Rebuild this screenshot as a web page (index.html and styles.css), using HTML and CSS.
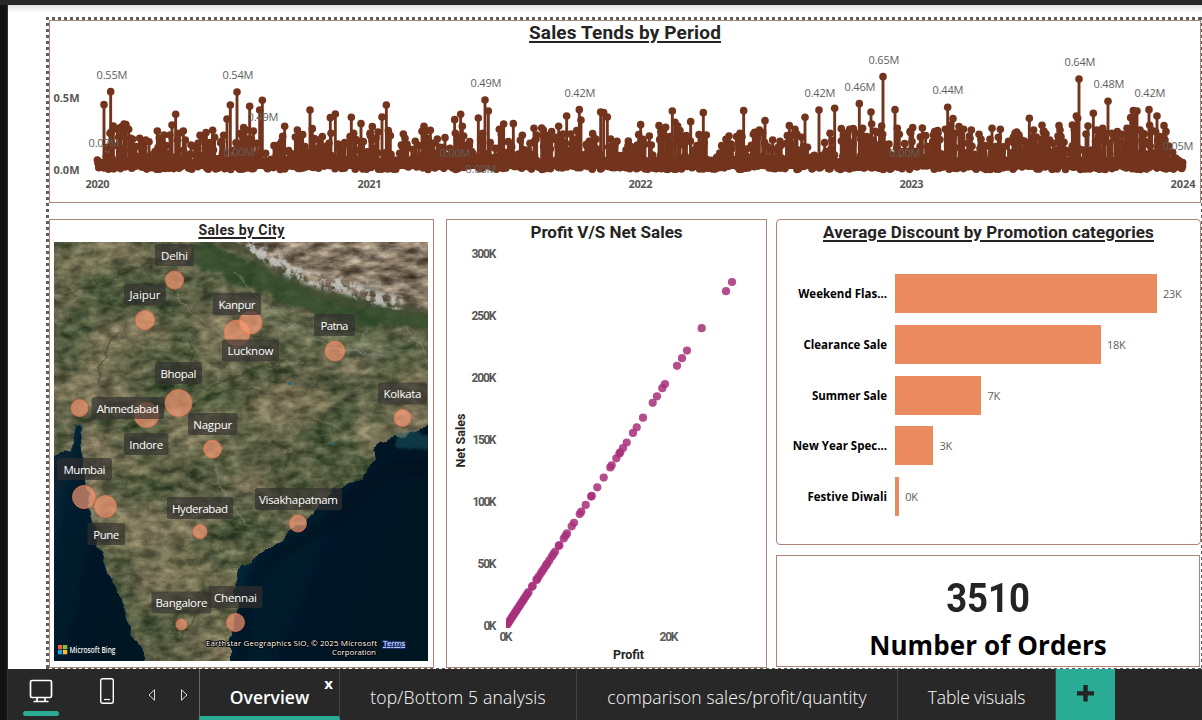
FILE: index.html
```html
<!DOCTYPE html>
<html lang="en">
<head>
<meta charset="utf-8">
<title>Sales dashboard</title>
<link rel="stylesheet" href="styles.css">
</head>
<body>
<div class="app">
  <div class="rail"></div>
  <div class="main">
    <div class="workspace">
      <div class="report">
        <section class="panel trend">
          <h2 class="title underlined t-trend">Sales Tends by Period</h2>
          <svg class="chart" id="trend" viewBox="50 47 1150 155" width="1150" height="155">
            <g id="stems" class="stems"></g>
            <g class="tick strong">
              <text x="53.5" y="102" textLength="26">0.5M</text>
              <text x="53.5" y="174" textLength="26">0.0M</text>
              <text x="85.5" y="188" textLength="24">2020</text>
              <text x="357.5" y="188" textLength="24">2021</text>
              <text x="628.5" y="188" textLength="24">2022</text>
              <text x="899.5" y="188" textLength="24">2023</text>
              <text x="1170.5" y="188" textLength="25">2024</text>
            </g>
            <g id="values" class="value"></g>
          </svg>
        </section>
        <div class="lower">
          <section class="panel city">
            <h2 class="title underlined t-city">Sales by City</h2>
            <svg class="map" viewBox="54 242 374 419" width="374" height="419">
              <defs>
                <filter id="terrain" x="0" y="0" width="100%" height="100%" color-interpolation-filters="sRGB">
                  <feTurbulence type="fractalNoise" baseFrequency="0.016 0.022" numOctaves="5" seed="11"/>
                  <feColorMatrix values=".6 .05 0 0 .04  .38 .1 0 0 .14  .38 .05 0 0 .06  0 0 0 0 1"/>
                </filter>
                <filter id="grain" x="0" y="0" width="100%" height="100%" color-interpolation-filters="sRGB">
                  <feTurbulence type="fractalNoise" baseFrequency="0.07 0.12" numOctaves="5" seed="4"/>
                  <feColorMatrix values="1.5 0 0 0 -.35  1.35 0 0 0 -.27  1.15 0 0 0 -.28  0 0 0 0 1"/>
                </filter>
                <filter id="plateau" x="0" y="0" width="100%" height="100%" color-interpolation-filters="sRGB">
                  <feTurbulence type="fractalNoise" baseFrequency="0.05 0.12" numOctaves="5" seed="8"/>
                  <feColorMatrix values=".85 0 0 0 .08  .8 0 0 0 .05  .72 0 0 0 .02  0 0 0 0 1"/>
                </filter>
                <filter id="snowy" x="-10%" y="-10%" width="120%" height="120%" color-interpolation-filters="sRGB">
                  <feTurbulence type="fractalNoise" baseFrequency="0.12" numOctaves="4" seed="3" result="n"/>
                  <feColorMatrix in="n" values="0 0 0 0 .76  0 0 0 0 .77  0 0 0 0 .75  6 0 0 0 -2.6" result="s"/>
                  <feGaussianBlur in="SourceAlpha" stdDeviation="2" result="a"/>
                  <feComposite in="s" in2="a" operator="in"/>
                </filter>
                <filter id="rough" x="-5%" y="-5%" width="110%" height="110%">
                  <feTurbulence type="fractalNoise" baseFrequency="0.08" numOctaves="3" seed="5"/>
                  <feDisplacementMap in="SourceGraphic" scale="9" xChannelSelector="R" yChannelSelector="G"/>
                </filter>
                <filter id="ridge" x="-5%" y="-20%" width="110%" height="140%">
                  <feTurbulence type="fractalNoise" baseFrequency="0.1" numOctaves="3" seed="9"/>
                  <feDisplacementMap in="SourceGraphic" scale="16" xChannelSelector="R" yChannelSelector="G"/>
                  <feGaussianBlur stdDeviation="1.2"/>
                </filter>
                <filter id="soft8"><feGaussianBlur stdDeviation="7"/></filter>
                <filter id="soft3" x="-20%" y="-20%" width="140%" height="140%"><feGaussianBlur stdDeviation="3"/></filter>
                <linearGradient id="sea" x1="0" x2="1" y1="0" y2="0.5">
                  <stop offset="0" stop-color="#0a2a3a"/><stop offset=".45" stop-color="#041b2b"/><stop offset="1" stop-color="#021220"/>
                </linearGradient>
                <clipPath id="tibet"><path d="M230 240 250 250 262 256 273 264 281 270 290 272 300 279 307 284 323 287 340 294 356 294 373 303 388 303 403 310 415 312 430 313 430 240Z"/></clipPath>
              </defs>
              <rect x="54" y="242" width="374" height="419" filter="url(#terrain)"/>
              <g filter="url(#soft8)">
                <g fill="#30492a" opacity=".5">
                  <ellipse cx="118" cy="287" rx="40" ry="16"/><ellipse cx="180" cy="350" rx="22" ry="24"/>
                  <ellipse cx="72" cy="340" rx="16" ry="30"/><ellipse cx="235" cy="465" rx="20" ry="10"/>
                  <ellipse cx="292" cy="478" rx="26" ry="30"/><ellipse cx="335" cy="458" rx="32" ry="16"/>
                  <ellipse cx="270" cy="535" rx="30" ry="12"/><ellipse cx="122" cy="590" rx="11" ry="52"/>
                  <ellipse cx="215" cy="398" rx="55" ry="10"/><ellipse cx="65" cy="250" rx="22" ry="8"/>
                </g>
                <g fill="#9a8965" opacity=".42">
                  <ellipse cx="80" cy="264" rx="26" ry="9"/><ellipse cx="125" cy="252" rx="26" ry="7"/><ellipse cx="148" cy="328" rx="20" ry="16"/>
                  <ellipse cx="110" cy="350" rx="24" ry="12"/><ellipse cx="290" cy="405" rx="45" ry="18"/>
                  <ellipse cx="155" cy="465" rx="40" ry="16"/><ellipse cx="125" cy="530" rx="20" ry="16"/>
                  <ellipse cx="185" cy="572" rx="30" ry="25"/><ellipse cx="408" cy="385" rx="20" ry="26"/>
                </g>
                <path d="M235 295 300 332 350 346 428 344" fill="none" stroke="#788464" stroke-width="16" opacity=".55"/>
              </g>
              <rect x="54" y="242" width="374" height="419" filter="url(#grain)" opacity=".32"/>
              <path d="M192 250C225 266 255 277 289 291S345 308 380 313S410 315 440 315" fill="none" stroke="#2b4628" stroke-width="25" opacity=".75" filter="url(#ridge)"/>
              <g clip-path="url(#tibet)">
                <rect x="220" y="242" width="208" height="74" filter="url(#plateau)"/>
              </g>
              <path d="M222 242C255 257 280 272 314 288S360 299 432 314" fill="none" stroke="#474d35" stroke-width="9" opacity=".75" filter="url(#ridge)"/>
              <path d="M246 246 268 256 292 271 318 281 345 286 368 296 384 300 402 304" fill="none" stroke="#fff" stroke-width="14" opacity=".9" filter="url(#snowy)"/>
              <path d="M275 248 310 256M315 274 365 282 428 290M350 258 400 250" fill="none" stroke="#fff" stroke-width="8" opacity=".3" filter="url(#snowy)"/>
              <g fill="none" stroke="#a2a58e" stroke-width="1.2" opacity=".35" filter="url(#rough)">
                <path d="M172 286C180 305 205 322 235 345S278 366 305 362"/>
                <path d="M235 272C256 300 290 330 330 344S350 352 385 354M405 328 428 355"/>
                <path d="M215 468 222 490 235 510 250 528"/>
              </g>
              <path d="M325 349 350 349 362 355 388 354M362 352 360 340 368 330" fill="none" stroke="#84908a" stroke-width="2" opacity=".4" filter="url(#rough)"/>
              <g fill="none" stroke="#27381f" stroke-width="2" opacity=".4" filter="url(#rough)">
                <path d="M55 294C85 294 106 278 148 264S165 252 178 248M205 390C230 378 250 370 285 360"/>
                <path d="M190 405 230 388 260 390M98 385 104 350 120 330M190 365 196 350 190 340"/>
                <path d="M180 640 207 600 203 580M270 440 290 450 285 470"/>
              </g>
              <g fill="none" stroke="#8f8266" stroke-width="2" opacity=".4" filter="url(#rough)">
                <path d="M112 528 140 545 173 555 195 558M175 580 190 570M260 395 300 400 330 392M100 500 110 520"/>
                <path d="M92 262 96 246 120 243M58 272 80 264M310 415 345 430"/>
              </g>
              <path d="M288 384 292 383M331 444 335 443" fill="none" stroke="#2d6673" stroke-width="3" opacity=".9"/>
              <g filter="url(#rough)">
                <path d="M45 460 56 454 68 450 74 442 73 431 75 424 80 427 81 435 83 449 84 470 84 484 88 497 92 520 98 544 105 565 115 583 122 600 126 614 132 635 143 652 149 675H40Z" fill="url(#sea)" stroke="#1f5262" stroke-opacity=".45"/>
                <path d="M229 675 229 640 234 626 238 607 235 580 241 565 251 563 259 555 270 548 280 540 287 535 300 525 318 510 329 496 338 487 350 482 362 477 368 468 375 460 373 450 380 441 393 439 405 436 413 434 420 428 440 424V675Z" fill="url(#sea)"/>
              </g>
              <path d="M392 436 402 434 412 432 430 436 434 446 415 449 395 446Z" fill="#1c5560" opacity=".55" filter="url(#ridge)"/>
              <path d="M436 466 390 470 363 492 325 526 298 542 272 558 255 580 248 604 240 665" fill="none" stroke="#01101f" stroke-width="8" opacity=".5" filter="url(#soft3)"/>
              <g id="bubbles" class="bubble"></g>
              <g id="cities" class="city-label"></g>
              <g>
                <rect x="58" y="645" width="4.3" height="4.3" fill="#f0622f"/><rect x="63" y="645" width="4.3" height="4.3" fill="#8bbd3c"/>
                <rect x="58" y="650" width="4.3" height="4.3" fill="#20a3e4"/><rect x="63" y="650" width="4.3" height="4.3" fill="#fbbc24"/>
                <text class="bing" x="69.5" y="652.5" textLength="46" lengthAdjust="spacingAndGlyphs">Microsoft Bing</text>
              </g>
              <g class="credit">
                <text x="206" y="646" textLength="171">Earthstar Geographics SIO, © 2025 Microsoft</text>
                <text x="332" y="655" textLength="44">Corporation</text>
                <text class="terms" x="383" y="646" textLength="22">Terms</text>
              </g>
            </svg>
          </section>
          <section class="panel profit">
            <h2 class="title t-profit">Profit V/S Net Sales</h2>
            <svg class="chart" viewBox="447 246 319 421" width="319" height="421">
              <defs><clipPath id="plot"><rect x="506" y="246" width="260" height="382"/></clipPath></defs>
              <g id="dots" class="dots" clip-path="url(#plot)"></g>
              <g class="tick cond">
                <text x="471.5" y="258" textLength="25">300K</text>
                <text x="471.5" y="320" textLength="25">250K</text>
                <text x="471.5" y="382" textLength="25">200K</text>
                <text x="472.5" y="444" textLength="24">150K</text>
                <text x="472.5" y="506" textLength="24">100K</text>
                <text x="477.5" y="568" textLength="19">50K</text>
                <text x="483.5" y="630" textLength="13">0K</text>
                <text x="499.5" y="641" textLength="13">0K</text>
                <text x="659.5" y="641" textLength="19">20K</text>
              </g>
              <g class="axis-name">
                <text x="613" y="659" textLength="31">Profit</text>
                <text transform="translate(464.5 467.5) rotate(-90)" textLength="54">Net Sales</text>
              </g>
            </svg>
          </section>
          <div class="side">
            <section class="panel discount">
              <h2 class="title underlined t-discount">Average Discount by Promotion categories</h2>
              <ul class="bars">
                <li><span class="name">Weekend Flas...</span><i class="bar" style="width:261.5px"></i><span class="amount">23K</span></li>
                <li><span class="name">Clearance Sale</span><i class="bar" style="width:205.5px"></i><span class="amount">18K</span></li>
                <li><span class="name">Summer Sale</span><i class="bar" style="width:86px"></i><span class="amount">7K</span></li>
                <li><span class="name">New Year Spec...</span><i class="bar" style="width:38px"></i><span class="amount">3K</span></li>
                <li><span class="name">Festive Diwali</span><i class="bar" style="width:3.7px"></i><span class="amount">0K</span></li>
              </ul>
            </section>
            <section class="panel orders">
              <strong class="count">3510</strong>
              <span class="caption">Number of Orders</span>
            </section>
          </div>
        </div>
      </div>
    </div>
    <footer class="tabs">
      <button class="view desktop on" aria-label="Desktop layout">
        <svg viewBox="0 0 24 24" width="24" height="24"><path d="M3 1.5H21Q22.5 1.5 22.5 3V17Q22.5 18.500 21 18.500H3Q1.500 18.500 1.500 17V3Q1.500 1.500 3 1.500ZM8 19V22M16 19V22M4.500 22.500H19.500" fill="none" stroke="#fff" stroke-width="1.7"/></svg>
      </button>
      <button class="view phone" aria-label="Mobile layout">
        <svg viewBox="0 0 16 28" width="16" height="28"><rect x="1.700" y="1.700" width="12.600" height="24.600" rx="2" fill="none" stroke="#fff" stroke-width="1.400"/><path d="M5 22.500H11" stroke="#fff" stroke-width="1.200"/></svg>
      </button>
      <div class="arrows">
        <svg viewBox="0 0 8 12" width="8" height="12"><path d="M6.500 .8V11.200L1 6Z"/></svg>
        <svg viewBox="0 0 8 12" width="8" height="12"><path d="M1.500 .8V11.200L7 6Z"/></svg>
      </div>
      <div class="tab active w1"><span>Overview</span><b class="close">x</b></div>
      <div class="tab w2"><span>top/Bottom 5 analysis</span></div>
      <div class="tab w3"><span>comparison sales/profit/quantity</span></div>
      <div class="tab w4"><span>Table visuals</span></div>
      <button class="add" aria-label="New page"><svg viewBox="0 0 17 17" width="17" height="17"><path d="M6.300 0H10.700V6.300H17V10.500H10.700V16.500H6.300V10.500H0V6.300H6.300Z" fill="#242424"/></svg></button>
    </footer>
  </div>
</div>
<script src="charts.js"></script>
</body>
</html>
```
FILE: styles.css
```css
* { box-sizing: border-box; }
body { margin: 0; background: #282828; font-family: "Open Sans", "Noto Sans", sans-serif; overflow: hidden; }
.app { display: flex; width: 1202px; height: 720px; padding-top: 5px; background: #282828; }
.rail { width: 8px; height: 720px; background: #131313; border-right: 1px solid #333; flex: none; }
.main { flex: 1; display: flex; flex-direction: column; min-width: 0; }
.workspace {
  height: 664px; padding: 12px 0 0 38px;
  background: linear-gradient(#e2e2e2, #fff 8px) #fff;
}
.report {
  width: 1156px; height: 652px; padding: 3px 0 0 3px;
  background:
    repeating-linear-gradient(90deg, #5e5e5e 0 3px, transparent 3px 6px) 0 0 / 100% 3px no-repeat,
    repeating-linear-gradient(180deg, #5e5e5e 0 3px, transparent 3px 6px) 0 0 / 3px 100% no-repeat,
    repeating-linear-gradient(180deg, #5e5e5e 0 3px, transparent 3px 6px) 100% 0 / 1px 100% no-repeat,
    repeating-linear-gradient(90deg, #5e5e5e 0 3px, transparent 3px 6px) 0 100% / 100% 1px no-repeat;
}
.panel { border: 1px solid #ae8478; background: #fff; display: flex; flex-direction: column; align-items: center; }
.title { margin: 0; font-family: Roboto, sans-serif; font-weight: 700; color: #252423; white-space: nowrap; flex: none; }
.underlined { text-decoration: underline; text-decoration-thickness: 1.5px; text-underline-offset: 2px; }
.chart, .map { display: block; flex: none; }
.map { align-self: flex-start; margin-left: 4px; }

.trend { width: 1152px; height: 183px; }
.t-trend { height: 26px; line-height: 24px; font-size: 19px; letter-spacing: .15px; }
.lower { display: flex; margin-top: 16px; }
.city { width: 385px; height: 449px; margin-right: 12px; }
.t-city { height: 22px; line-height: 21px; font-size: 14px; letter-spacing: .4px; }
.profit { width: 321px; height: 449px; margin-right: 9px; }
.t-profit { height: 26px; line-height: 25px; font-size: 17px; }
.side { width: 425px; display: flex; flex-direction: column; gap: 10px; }
.discount { height: 326px; border-radius: 4px; }
.t-discount { height: 27px; line-height: 25px; font-size: 17px; letter-spacing: .12px; }
.orders { height: 112px; width: 424px; }

.stems line { stroke: #73341d; stroke-width: 2.9; }
.stems circle { fill: #73341d; }
.tick { font: 700 11px "Open Sans", sans-serif; fill: #5a5856; }
.cond { font: 700 12px Roboto, sans-serif; }
.value { font: 11px "Open Sans", sans-serif; fill: #605e5c; text-anchor: middle; }
.dots circle { fill: #a8307c; opacity: .86; }
.axis-name { font: 700 12.5px Roboto, sans-serif; fill: #252423; }

.bubble circle { fill: #fe9c77; fill-opacity: .66; stroke: #e9714d; stroke-width: 1; stroke-opacity: .8; }
.city-label rect { fill: #33302f; fill-opacity: .66; }
.city-label text { font: 11.5px "Open Sans", sans-serif; fill: #fff; text-anchor: middle; }
.bing { font: 600 8px "Open Sans", sans-serif; fill: #f4f4f4; }
.credit { font: 8px "Open Sans", sans-serif; fill: #fff; paint-order: stroke; stroke: #000; stroke-width: 1.6px; }
.terms { fill: #e2e8ff; text-decoration: underline; stroke: #233f90; }

.bars { list-style: none; margin: 27px 0 0; padding: 0; width: 100%; }
.bars li { display: flex; align-items: center; height: 39px; margin-bottom: 11.8px; }
.name { width: 110px; text-align: right; font-size: 11.5px; font-weight: 700; color: #000; white-space: nowrap; }
.bar { height: 39px; margin: 0 6.5px 0 8px; background: #eb895f; flex: none; }
.amount { font-size: 11px; color: #605e5c; letter-spacing: -.3px; }
.count { margin-top: 19px; font: 700 41px/46px Roboto, sans-serif; color: #252423; transform: scaleX(.89); }
.caption { margin-top: 5px; font-weight: 700; font-size: 26px; line-height: 38px; letter-spacing: .1px; color: #000; }

.tabs { height: 51px; display: flex; background: #282828; color: #fff; }
.view { border: 0; padding: 0; background: none; display: flex; justify-content: center; }
.desktop { width: 36px; margin-left: 15px; padding-top: 10px; position: relative; }
.desktop::after { content: ""; position: absolute; left: 0; top: 42px; width: 36px; height: 5px; border-radius: 3px; background: #2aab94; }
.phone { width: 16px; margin-left: 40px; padding-top: 8px; }
.arrows { display: flex; gap: 24px; padding-top: 20px; margin-left: 33px; width: 51px; }
.arrows path { fill: none; stroke: #ddd; stroke-width: 1; }
.tab { height: 51px; display: flex; align-items: center; justify-content: center; padding-top: 5px; border-right: 1px solid #454545; font-size: 17.500px; font-weight: 300; white-space: nowrap; flex: none; }
.w1 { width: 141px; }
.w2 { width: 237px; letter-spacing: .2px; }
.w3 { width: 321px; letter-spacing: .12px; }
.w4 { width: 158px; letter-spacing: -.1px; }
.active { position: relative; font-weight: 600; border-left: 1px solid #666; border-bottom: 4px solid #2aab94; padding-top: 9px; }
.close { position: absolute; right: 6px; top: 3px; font: 700 15px/22px "Open Sans", sans-serif; }
.add { border: 0; width: 59px; height: 51px; padding: 0 0 2px; background: #2aab94; display: flex; align-items: center; justify-content: center; }
```
FILE: charts.js
```js
const NS = "http://www.w3.org/2000/svg";
function add(parent, tag, attrs, text) {
  const el = document.createElementNS(NS, tag);
  for (const k in attrs) el.setAttribute(k, attrs[k]);
  if (text) el.textContent = text;
  parent.appendChild(el);
}

// Daily sales peaks, in thirds of a pixel: x, y pairs
const peaks = [
  292,480,312,314,332,275,330,400,340,378,352,388,362,382,372,372,378,374,386,388,398,418,419,415,437,420,408,440,452,465,472,393,465,455,480,430,492,405,498,437,516,375,527,343,538,400,550,393,573,435,585,440,600,406,610,415,618,398,638,391,628,430,662,428,671,406,681,357,691,315,711,276,731,383,738,390,722,400,749,319,760,393,770,430,779,330,787,301,797,460,822,437,830,450,840,432,854,379,866,452,892,390,900,415,908,404,915,440,930,330,937,386,945,445,955,420,967,410,975,440,991,353,1006,342,993,400,1015,438,1034,428,1046,430,1054,352,1061,400,1050,410,1083,371,1090,425,1110,400,1117,380,1122,445,1134,396,1146,351,1159,315,1165,392,1173,463,1199,460,
  1210,402,1215,415,1246,424,1242,455,1272,379,1276,395,1291,391,1285,420,1300,430,1312,417,1335,413,1350,445,1364,359,1382,343,1387,379,1366,400,1391,408,1409,425,1408,437,1435,354,1455,300,1465,333,1448,400,1485,445,1495,445,1498,388,1511,372,1506,430,1525,425,1540,371,1535,440,1555,462,1567,406,1585,450,1590,430,1602,385,1610,405,1625,384,1637,410,1630,390,1655,395,1645,420,1676,379,1668,420,1700,348,1712,402,1689,402,1697,430,1730,392,1738,329,1743,360,1767,430,1762,440,1778,401,1788,418,1802,336,1811,338,1822,351,1832,417,1844,437,1865,482,1885,423,1884,437,1878,450,1893,440,1912,435,1922,374,1929,418,1915,450,1948,408,1958,465,1977,377,1985,395,1997,382,1990,400,2017,333,2025,367,2033,378,2040,392,2010,410,2059,407,2052,410,2072,365,2080,450,2097,404,2110,338,2119,405,2104,410,2145,482,2165,437,2178,418,2187,408,2195,447,2210,410,2220,400,2231,332,2226,410,2240,447,2260,403,2264,397,2278,390,2288,398,2270,440,2295,362,2318,420,2328,450,2340,424,2345,474,2368,377,2385,388,2376,405,
  2405,412,2415,352,2443,466,2457,330,2474,428,2478,455,2490,400,2504,325,2524,386,2530,405,2537,400,2549,388,2560,386,2555,430,2578,311,2588,385,2583,395,2600,410,2613,336,2615,372,2608,415,2626,394,2632,435,2645,378,2649,230,2648,403,2640,400,2667,432,2660,450,2685,329,2692,385,2714,431,2730,395,2738,383,2745,455,2767,384,2777,407,2760,440,2793,463,2804,395,2800,405,2814,400,2813,392,2843,322,2859,356,2852,375,2836,388,2866,400,2877,380,2891,388,2885,425,2914,390,2910,415,2903,430,2937,403,2957,437,2950,455,2976,385,2970,440,3001,388,2987,440,3013,440,3040,412,3045,400,3050,396,3057,405,3073,423,3064,420,3088,355,3101,390,3109,411,3096,430,3126,376,3130,395,3138,402,3149,420,3160,430,3175,424,3177,377,3180,390,3192,427,3208,458,3217,375,3229,348,3237,237,3233,355,3250,450,3264,378,3275,450,3280,340,3290,390,3299,395,3308,385,3315,400,3324,304,3335,400,3345,405,3352,395,3365,403,3358,430,3381,385,3375,405,3392,353,3400,332,3411,333,3404,340,3420,390,3433,402,3428,400,3447,329,3449,376,3471,348,3467,395,3480,410,3492,377,3485,420,3495,420,3506,438,3518,458,3528,475,3548,488
];
const stems = document.getElementById("stems");
function stem(x, y) {
  add(stems, "line", { x1: x, x2: x, y1: y, y2: 169 });
  add(stems, "circle", { cx: x, cy: y, r: 3.8 });
}
let seed = 20;
const rnd = () => (seed = (seed * 16807) % 2147483647) / 2147483647;
for (let x = 98; x < 1183; x += 0.75) {
  const r = rnd();
  stem(x, r < 0.76 || x > 1165 || x < 102 ? 169.5 - rnd() * 10 : r < 0.92 ? 161 - rnd() * 8 : 155 - rnd() * 14);
}
for (let i = 0; i < peaks.length; i += 2) {
  const x = peaks[i] / 3, y = peaks[i + 1] / 3;
  stem(x, y);
  // Busy days beside a mid-height peak
  if (y > 124 && y < 150) stem(x + (i % 4 ? 2 : -2), y + 5 + (i % 7));
}

const values = document.getElementById("values");
[["0.55M",112,79],["0.54M",238,79],["0.49M",263,121],["0.07M",104,147],["0.00M",239,156],["0.49M",486,87],["0.42M",580,97],
 ["0.00M",455,157],["0.00M",481,173],["0.42M",820,97],["0.46M",860,91],["0.65M",884,64],["0.00M",905,157],["0.44M",948,94],
 ["0.64M",1080,66],["0.48M",1109,88],["0.42M",1150,97],["0.05M",1178,150]
].forEach(([t, x, y]) => add(values, "text", { x, y, textLength: 31 }, t));

// City bubbles: x, y, radius
const bubbles = document.getElementById("bubbles");
[[174.500,280,9],[145,320,9.500],[237,333,13],[250.500,322.500,11.500],[335,351,10],[178.500,403,13.500],[79.500,408,8.500],[146.500,415,12.500],
 [402.500,418,8.500],[212.500,449,9],[84,497,11.500],[105.500,506.500,11],[200,531.500,7],[298,523.500,8.500],[181.500,624.500,5.500],[235.500,622.500,9]
].forEach(([cx, cy, r]) => add(bubbles, "circle", { cx, cy, r }));

// City labels: name, plate x, plate y, plate width, text width
const cities = document.getElementById("cities");
[["Delhi",155,244,39,27],["Jaipur",124,283.500,42,31],["Kanpur",213,293,48,37],["Patna",314,314,41,28],["Lucknow",222,339.500,57,46],
 ["Bhopal",155,362,47,36],["Ahmedabad",91.500,397,72.500,62],["Kolkata",378,382.500,49,38],["Nagpur",188,413,49.500,39],["Indore",124,433,44.500,34],
 ["Mumbai",57,458,55,42],["Pune",87.500,523,37.500,26],["Hyderabad",167,497,66,56],["Visakhapatnam",255,488,87,79],
 ["Bangalore",151.500,591.500,60,52],["Chennai",208.500,586,54,43]
].forEach(([t, x, y, w, tw]) => {
  add(cities, "rect", { x, y, width: w, height: 22, rx: 2.5 });
  add(cities, "text", { x: x + w / 2, y: y + 15.7, textLength: tw }, t);
});

// Net sales grow linearly with profit
const dots = document.getElementById("dots");
const xs = [732,726,701.7,687,682,677,665,662.3,657,652.7,643,636.7,633,626.7,623,620.3,619.3,616.3,611.7,610.3,603.7,597.3,591.7,591.2,585.7,
  581.3,579.7,574,571.7,567,565.5,563.7,559.3,558.7,555,553.3,551.7,549.3,547.3,546,544,542.3,540.7,538.7,537,536.5,532.7,532];
for (let x = 528.5; x > 505.5; x -= 1.2) xs.push(x);
xs.forEach(x => add(dots, "circle", { cx: x, cy: 282 + (732 - x) * 1.524, r: 4.1 }));
```
